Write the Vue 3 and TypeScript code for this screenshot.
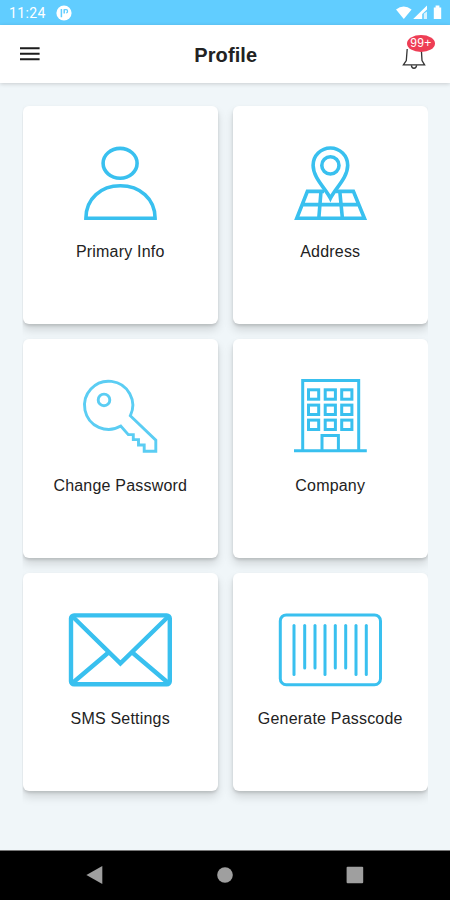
<script setup lang="ts">
type IconName = 'person' | 'address' | 'key' | 'company' | 'mail' | 'barcode'

interface Tile {
  icon: IconName
  label: string
}

const tiles: Tile[] = [
  { icon: 'person', label: 'Primary Info' },
  { icon: 'address', label: 'Address' },
  { icon: 'key', label: 'Change Password' },
  { icon: 'company', label: 'Company' },
  { icon: 'mail', label: 'SMS Settings' },
  { icon: 'barcode', label: 'Generate Passcode' },
]

const windowColumns = [30.5, 47.2, 63.7]
const windowRows = [12.8, 28.1, 43.1]

const bars = [
  { x: 16, end: 63.4 },
  { x: 26.7, end: 57 },
  { x: 37, end: 57 },
  { x: 47, end: 63.4 },
  { x: 57.3, end: 57 },
  { x: 67.7, end: 57 },
  { x: 78, end: 63.4 },
  { x: 88.3, end: 63.4 },
]
</script>

<template>
  <div class="screen">
    <div class="status">
      <span class="clock">11:24</span>
      <svg class="app-mark" width="16" height="16" viewBox="0 0 16 16">
        <circle cx="8" cy="8" r="7.6" fill="#fff" />
        <path d="M5.4 4V12.2M8.2 4.2V8.6" fill="none" stroke="#61cdff" stroke-width="1.5" />
        <path d="M8.2 4.6H10.2C12 4.6 12 7.8 10.2 7.8" fill="none" stroke="#61cdff" stroke-width="1.3" />
      </svg>
      <svg class="signals" width="50" height="18" viewBox="0 0 50 18">
        <path d="M0 5.6Q7.6 -0.8 15.6 5.6L7.8 15Z" fill="#fff" />
        <path d="M17.2 15L31 1.6V5.4L26.2 10V15Z" fill="#fff" />
        <path d="M27.8 9.4V15H31V7.4Z" fill="#fff" opacity=".75" />
        <path d="M37.8 3.4h1.8V1.6h3.8v1.8h1.8v11.6h-7.4z" fill="#fff" />
      </svg>
    </div>

    <header class="bar">
      <svg class="menu" width="20" height="16" viewBox="0 0 20 16">
        <path d="M0 2.2h19.6M0 7.7h19.6M0 13.2h19.6" stroke="#1c1c1c" stroke-width="2" />
      </svg>
      <h1>Profile</h1>
      <div class="bell">
        <svg width="24" height="34" viewBox="0 0 24 34">
          <path d="M5.2 14L4.3 25.6L1.4 29.8H22.6L20 25.6L19.3 14" fill="none" stroke="#333" stroke-width="1.3" />
          <path d="M9.4 30.2c.3 4 4.8 4 5.2 0" fill="none" stroke="#333" stroke-width="1.4" />
        </svg>
        <span class="badge">99+</span>
      </div>
    </header>

    <main>
      <div class="grid">
        <div v-for="tile in tiles" :key="tile.icon" class="tile">
          <svg class="icon" :class="tile.icon" width="104" height="78" viewBox="0 0 104 78">
            <template v-if="tile.icon === 'person'">
              <ellipse cx="52.1" cy="19.3" rx="17" ry="14.9" />
              <path d="M17.9 74.2C18 54.5 33 41.8 52.3 41.8S87 54.5 87.1 74.2Z" />
            </template>
            <template v-else-if="tile.icon === 'address'">
              <path d="M46 47.4H29.4L18.8 74.3H86.4L75.4 47.4H58M24.2 60.6H80.8M43 47.4L40.8 74.3M61.8 47.4L64.4 74.3" />
              <path d="M52.4 54.3C47.8 44.5 35.1 34 35.1 21.3A17.3 17.3 0 0 1 69.7 21.3C69.7 34 57 44.5 52.4 54.3Z" fill="#fff" />
              <circle cx="52.4" cy="21.4" r="8.6" />
            </template>
            <template v-else-if="tile.icon === 'key'">
              <path d="M62.3 38.8A24.1 24.1 0 1 0 52.8 49.1L60.3 57.6H65.3V62.6H70.5V68H76.2V74.2H87.8V63.2Z" />
              <circle cx="36" cy="22.9" r="5.8" />
            </template>
            <template v-else-if="tile.icon === 'company'">
              <path d="M24.7 73.8V3.5H80.7V73.8M16 73.8H88.8M44 73.8V58.5H60.4V73.8" />
              <template v-for="y in windowRows" :key="y">
                <rect v-for="x in windowColumns" :key="x" :x="x" :y="y" width="10.2" height="9.4" />
              </template>
            </template>
            <template v-else-if="tile.icon === 'mail'">
              <rect x="3" y="4.4" width="98.8" height="68.8" rx="3" />
              <path d="M4.5 5.5L52.4 52.3L100.3 5.5M4.5 72L39.6 42.2M100.3 72L65.2 42.2" />
            </template>
            <template v-else>
              <rect x="2.3" y="3.9" width="100.2" height="69.8" rx="6" />
              <path v-for="bar in bars" :key="bar.x" :d="`M${bar.x} 14.6V${bar.end}`" />
            </template>
          </svg>
          <span class="label">{{ tile.label }}</span>
        </div>
      </div>
    </main>

    <nav class="keys">
      <svg width="18" height="20" viewBox="0 0 18 20"><path d="M0.4 10L16.3 1V19Z" /></svg>
      <svg width="18" height="20" viewBox="0 0 18 20"><circle cx="9" cy="10" r="7.8" /></svg>
      <svg width="18" height="20" viewBox="0 0 18 20"><rect x="0.6" y="1.8" width="16.6" height="16.4" rx="1" /></svg>
    </nav>
  </div>
</template>

<style>
body {
  margin: 0;
}
</style>

<style scoped>
.screen {
  display: flex;
  flex-direction: column;
  width: 450px;
  height: 900px;
  overflow: hidden;
  background: #f0f6f9;
  font-family: "Liberation Sans", Arial, sans-serif;
  color: #222;
}

.status {
  display: flex;
  align-items: center;
  flex: none;
  box-sizing: border-box;
  height: 25px;
  padding: 1px 4px 0 9px;
  background: #61cdff;
}

.clock {
  width: 47px;
  font-family: Roboto, sans-serif;
  font-size: 14px;
  letter-spacing: 0.4px;
  color: #fff;
}

.signals {
  margin-left: auto;
}

.bar {
  position: relative;
  z-index: 1;
  display: grid;
  grid-template-columns: 1fr auto 1fr;
  align-items: center;
  flex: none;
  box-sizing: border-box;
  height: 58px;
  padding: 0 15px 0 20px;
  background: #fff;
  box-shadow: 0 1px 4px rgba(0, 0, 0, 0.17);
}

h1 {
  margin: 1px 3.5px 0 0;
  font-size: 20px;
  line-height: 24px;
  font-weight: 700;
  letter-spacing: 0.1px;
}

.bell {
  position: relative;
  justify-self: end;
  width: 33px;
  height: 34px;
  margin-bottom: 5px;
}

.bell svg {
  display: block;
}

.badge {
  position: absolute;
  left: 5px;
  top: 0;
  width: 28px;
  height: 17px;
  border-radius: 50%;
  background: #ee3e55;
  color: #fff;
  font-size: 12px;
  line-height: 17px;
  letter-spacing: 0.3px;
  text-align: center;
}

main {
  flex: 1;
  padding: 22.5px 22px 0 22.5px;
}

.grid {
  display: grid;
  grid-template-columns: 1fr 1fr;
  grid-auto-rows: 218.5px;
  gap: 15px 14.5px;
  clip-path: inset(-2px 0 -24px 0);
}

.tile {
  display: flex;
  flex-direction: column;
  align-items: center;
  box-sizing: border-box;
  padding-top: 38px;
  border-radius: 6px;
  background: #fff;
  box-shadow: 0 6px 10px rgba(0, 0, 0, 0.13), 0 2px 3px rgba(0, 0, 0, 0.13);
}

.icon {
  overflow: visible;
  fill: none;
  stroke: #39c0ef;
  stroke-width: 3.6;
}

.key {
  stroke: #5bcdf3;
  stroke-width: 2.9;
}

.company {
  stroke-width: 3;
}

.mail {
  stroke-width: 4.4;
}

.barcode {
  stroke-width: 3;
  stroke-linecap: round;
}

.label {
  margin-top: 20.5px;
  font-size: 16px;
  line-height: 20px;
  letter-spacing: 0.2px;
  white-space: nowrap;
}

.keys {
  display: flex;
  justify-content: space-between;
  align-items: center;
  flex: none;
  box-sizing: border-box;
  height: 50px;
  padding: 0 86.5px 1px 86px;
  border-top: 1px solid #777;
  background: #000;
}

.keys svg {
  fill: #9f9f9f;
}
</style>
